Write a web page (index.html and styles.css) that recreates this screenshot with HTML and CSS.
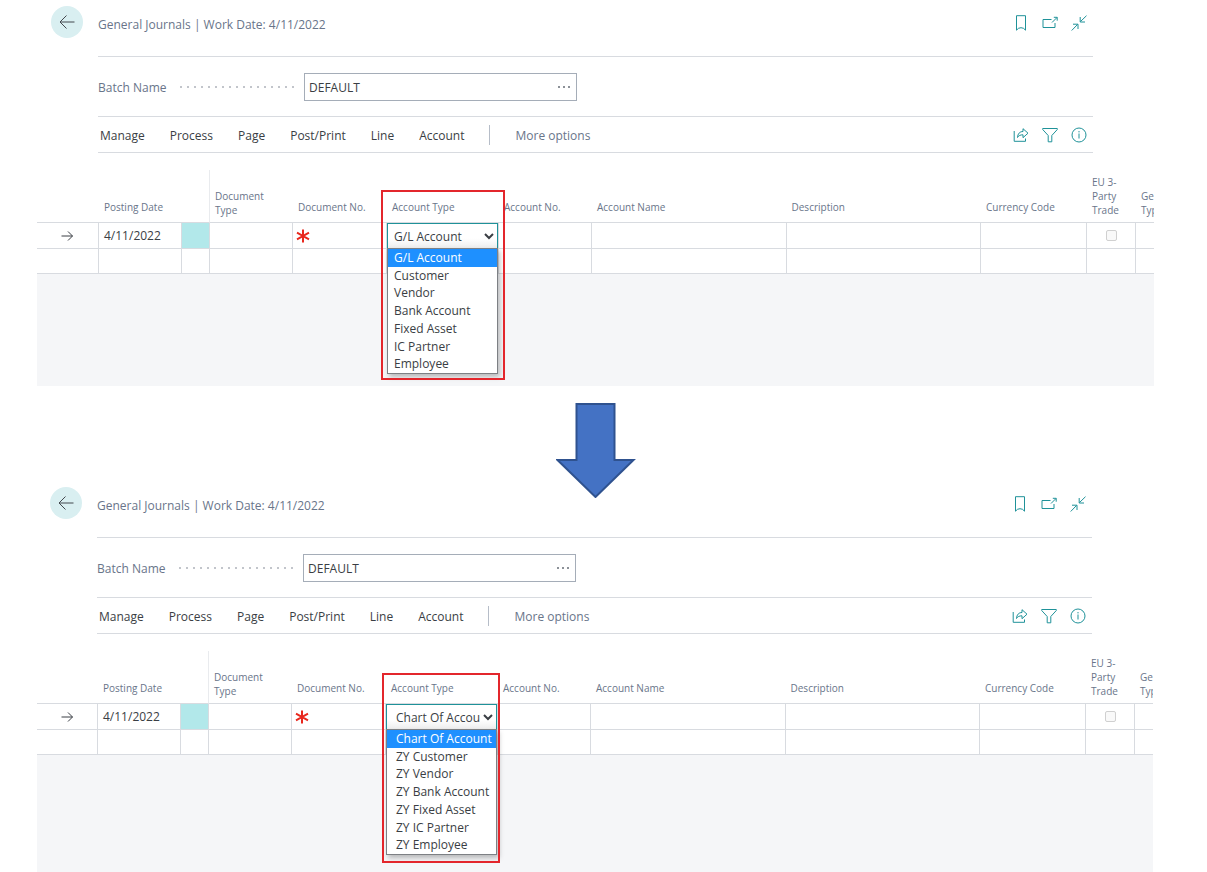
FILE: index.html
```html
<!DOCTYPE html>
<html lang="en">
<head>
<meta charset="utf-8">
<meta name="viewport" content="width=device-width, initial-scale=1">
<title>General Journals</title>
<link rel="stylesheet" href="styles.css">
</head>
<body>
<svg class="sprite" aria-hidden="true">
  <symbol id="i-back" viewBox="0 0 16 16"><path d="M15.5 8H1M7.5 1.5 1 8l6.500 6.500"/></symbol>
  <symbol id="i-row" viewBox="0 0 12 12"><path d="M.5 6h11M7 1.500 11.500 6 7 10.500"/></symbol>
  <symbol id="i-bookmark" viewBox="0 0 16 16"><path d="M3.500.7h9v14.500L10.500 13.300 8 12.700l-2.500.6-2 1.900z"/></symbol>
  <symbol id="i-window" viewBox="0 0 16 16"><path d="M9.500 4.500H1v8h12V8M10 7.500 15 2.500M11.800 2.300H15.200V5.700"/></symbol>
  <symbol id="i-collapse" viewBox="0 0 16 16"><path d="M15.500.7 9.500 6.500M9.200 2v5H14M.7 15.500 6.500 9.500M2 9.200h5V14"/></symbol>
  <symbol id="i-share" viewBox="0 0 16 16"><path d="M1.200 4v10.300h11.300V11.500M4.500 10.500c.3-3.800 2.300-6 5.500-6V1.700l5 4.500-5 4.500V7.800c-2.500 0-4.300.7-5.500 2.700z"/></symbol>
  <symbol id="i-filter" viewBox="0 0 16 16"><path d="M.7 1.500h14.600v1L9.800 8.500v6.300H6.200V8.500L.7 2.500z"/></symbol>
  <symbol id="i-info" viewBox="0 0 16 16"><circle cx="8" cy="8" r="7"/><path d="M8 6.500v5M8 4v1.400"/></symbol>
  <symbol id="i-star" viewBox="0 0 14 14"><path d="M7 .5v13M1 3.700l12 6.600M13 3.700 1 10.300"/></symbol>
</svg>

<main class="page">
  <section class="journal" aria-label="General Journals, standard account types">
    <div class="top">
      <button class="back" type="button" aria-label="Back"><svg><use href="#i-back"/></svg></button>
      <div class="top-main">
        <header class="title-bar">
          <h1 class="title">General Journals | Work Date: 4/11/2022</h1>
          <div class="icons">
            <button type="button" aria-label="Bookmark"><svg><use href="#i-bookmark"/></svg></button>
            <button type="button" aria-label="Open in new window"><svg><use href="#i-window"/></svg></button>
            <button type="button" aria-label="Collapse"><svg><use href="#i-collapse"/></svg></button>
          </div>
        </header>
        <div class="batch">
          <label class="batch-label" for="batch-1">Batch Name</label>
          <span class="leader"></span>
          <div class="lookup">
            <input id="batch-1" type="text" value="DEFAULT">
            <button type="button" aria-label="Look up batch"><i></i><i></i><i></i></button>
          </div>
        </div>
        <nav class="actions">
          <button type="button">Manage</button>
          <button type="button">Process</button>
          <button type="button">Page</button>
          <button type="button">Post/Print</button>
          <button type="button">Line</button>
          <button type="button">Account</button>
          <span class="divider"></span>
          <button class="more" type="button">More options</button>
          <div class="icons">
            <button type="button" aria-label="Share"><svg><use href="#i-share"/></svg></button>
            <button type="button" aria-label="Filter"><svg><use href="#i-filter"/></svg></button>
            <button type="button" aria-label="Details"><svg><use href="#i-info"/></svg></button>
          </div>
        </nav>
      </div>
    </div>
    <table class="lines">
      <colgroup><col class="c-rail"><col class="c-date"><col class="c-menu"><col class="c-doctype"><col class="c-docno"><col class="c-acctype"><col class="c-accno"><col><col><col class="c-currency"><col class="c-eu"><col class="c-gen"></colgroup>
      <thead>
        <tr><th></th><th>Posting Date</th><th class="freeze"></th><th class="wrapped">Document Type</th><th>Document No.</th><th>Account Type</th><th>Account No.</th><th>Account Name</th><th>Description</th><th>Currency Code</th><th class="wrapped">EU 3-Party Trade</th><th class="wrapped cut">Gen. Type</th></tr>
      </thead>
      <tbody>
        <tr>
          <td class="pointer"><svg><use href="#i-row"/></svg></td><td>4/11/2022</td><td class="active"></td><td></td>
          <td class="required"><svg><use href="#i-star"/></svg></td>
          <td class="choice">
            <div class="picker">
              <select aria-label="Account Type"><option>G/L Account</option><option>Customer</option><option>Vendor</option><option>Bank Account</option><option>Fixed Asset</option><option>IC Partner</option><option>Employee</option></select>
              <ul class="menu" role="listbox" aria-label="Account Type">
                <li role="option" aria-selected="true">G/L Account</li><li role="option">Customer</li><li role="option">Vendor</li><li role="option">Bank Account</li><li role="option">Fixed Asset</li><li role="option">IC Partner</li><li role="option">Employee</li>
              </ul>
              <span class="mark"></span>
            </div>
          </td>
          <td></td><td></td><td></td><td></td><td class="check"><input type="checkbox" aria-label="EU 3-Party Trade" disabled></td><td></td>
        </tr>
        <tr><td></td><td></td><td></td><td></td><td></td><td></td><td></td><td></td><td></td><td></td><td></td><td></td></tr>
      </tbody>
    </table>
    <div class="rest"></div>
  </section>

  <svg class="arrow" viewBox="0 0 80 95" aria-hidden="true"><path d="M20.500 1H58.500V57H77.500L39.500 94 1.500 57H20.500z"/></svg>

  <section class="journal custom" aria-label="General Journals, custom account types">
    <div class="top">
      <button class="back" type="button" aria-label="Back"><svg><use href="#i-back"/></svg></button>
      <div class="top-main">
        <header class="title-bar">
          <h2 class="title">General Journals | Work Date: 4/11/2022</h2>
          <div class="icons">
            <button type="button" aria-label="Bookmark"><svg><use href="#i-bookmark"/></svg></button>
            <button type="button" aria-label="Open in new window"><svg><use href="#i-window"/></svg></button>
            <button type="button" aria-label="Collapse"><svg><use href="#i-collapse"/></svg></button>
          </div>
        </header>
        <div class="batch">
          <label class="batch-label" for="batch-2">Batch Name</label>
          <span class="leader"></span>
          <div class="lookup">
            <input id="batch-2" type="text" value="DEFAULT">
            <button type="button" aria-label="Look up batch"><i></i><i></i><i></i></button>
          </div>
        </div>
        <nav class="actions">
          <button type="button">Manage</button>
          <button type="button">Process</button>
          <button type="button">Page</button>
          <button type="button">Post/Print</button>
          <button type="button">Line</button>
          <button type="button">Account</button>
          <span class="divider"></span>
          <button class="more" type="button">More options</button>
          <div class="icons">
            <button type="button" aria-label="Share"><svg><use href="#i-share"/></svg></button>
            <button type="button" aria-label="Filter"><svg><use href="#i-filter"/></svg></button>
            <button type="button" aria-label="Details"><svg><use href="#i-info"/></svg></button>
          </div>
        </nav>
      </div>
    </div>
    <table class="lines">
      <colgroup><col class="c-rail"><col class="c-date"><col class="c-menu"><col class="c-doctype"><col class="c-docno"><col class="c-acctype"><col class="c-accno"><col><col><col class="c-currency"><col class="c-eu"><col class="c-gen"></colgroup>
      <thead>
        <tr><th></th><th>Posting Date</th><th class="freeze"></th><th class="wrapped">Document Type</th><th>Document No.</th><th>Account Type</th><th>Account No.</th><th>Account Name</th><th>Description</th><th>Currency Code</th><th class="wrapped">EU 3-Party Trade</th><th class="wrapped cut">Gen. Type</th></tr>
      </thead>
      <tbody>
        <tr>
          <td class="pointer"><svg><use href="#i-row"/></svg></td><td>4/11/2022</td><td class="active"></td><td></td>
          <td class="required"><svg><use href="#i-star"/></svg></td>
          <td class="choice">
            <div class="picker">
              <select aria-label="Account Type"><option>Chart Of Account</option><option>ZY Customer</option><option>ZY Vendor</option><option>ZY Bank Account</option><option>ZY Fixed Asset</option><option>ZY IC Partner</option><option>ZY Employee</option></select>
              <ul class="menu" role="listbox" aria-label="Account Type">
                <li role="option" aria-selected="true">Chart Of Account</li><li role="option">ZY Customer</li><li role="option">ZY Vendor</li><li role="option">ZY Bank Account</li><li role="option">ZY Fixed Asset</li><li role="option">ZY IC Partner</li><li role="option">ZY Employee</li>
              </ul>
              <span class="mark"></span>
            </div>
          </td>
          <td></td><td></td><td></td><td></td><td class="check"><input type="checkbox" aria-label="EU 3-Party Trade" disabled></td><td></td>
        </tr>
        <tr><td></td><td></td><td></td><td></td><td></td><td></td><td></td><td></td><td></td><td></td><td></td><td></td></tr>
      </tbody>
    </table>
    <div class="rest"></div>
  </section>
</main>
</body>
</html>
```

FILE: styles.css
```css
:root {
  --rail: 61px;
  --grid-rail: 62px;
  --line: #d8dbe0;
  --muted: #69758a;
  --ink: #3a3e44;
  --teal: #1f9299;
}

* { box-sizing: border-box; }

body {
  margin: 0;
  background: #fff;
  color: var(--ink);
  font: 12px/18px "Open Sans", "Noto Sans", sans-serif;
}

button, input, select { font: inherit; color: inherit; }
button { padding: 0; border: 0; background: none; cursor: pointer; }
svg { display: block; fill: none; stroke: currentColor; }
.sprite { position: absolute; width: 0; height: 0; }

.page {
  display: flex;
  flex-direction: column;
  min-height: 100vh;
  padding: 0 53px 0 37px;
}

.journal { display: flex; flex-direction: column; }
.journal.custom { --rail: 60px; --grid-rail: 61px; flex: 1; margin-right: 1px; }

/* Header, batch field and action bar */
.top {
  display: grid;
  grid-template-columns: var(--rail) 1fr;
  padding-right: 61px;
}
.back {
  display: grid;
  place-items: center;
  justify-self: end;
  width: 32px;
  height: 32px;
  margin: 6px 15px 0 0;
  border-radius: 50%;
  background: #d9eff1;
}
.back svg { width: 16px; height: 16px; stroke: #43484e; }

.title-bar {
  display: flex;
  justify-content: space-between;
  height: 57px;
  padding: 15px 6px 0 0;
  border-bottom: 1px solid var(--line);
}
.title { margin: 0; font-size: 12px; line-height: 20px; font-weight: 400; color: var(--muted); }
.icons { display: flex; gap: 13px; height: 16px; color: var(--teal); }
.icons svg { width: 16px; height: 16px; }

.batch {
  display: flex;
  align-items: center;
  height: 60px;
  border-bottom: 1px solid var(--line);
}
.batch-label { width: 82px; padding-top: 2px; color: var(--muted); }
.leader {
  width: 114px;
  height: 2px;
  background: radial-gradient(circle at 1px 1px, #c2c5cb 1px, transparent 1px) 0 0 / 7px 2px;
}
.lookup {
  display: flex;
  width: 273px;
  height: 28px;
  margin-left: 10px;
  border: 1px solid #a5adb8;
}
.lookup input {
  flex: 1;
  min-width: 0;
  padding: 2px 4px 0;
  border: 0;
  outline: 0;
  background: none;
}
.lookup button { display: flex; align-items: center; gap: 3px; padding: 0 6px; }
.lookup i { width: 2px; height: 2px; border-radius: 50%; background: #666c76; }

.actions {
  display: flex;
  align-items: center;
  gap: 25px;
  height: 36px;
  padding: 0 6px 0 2px;
  border-bottom: 1px solid var(--line);
}
.actions > button { padding-top: 2px; }
.actions .more { color: var(--muted); }
.actions .icons { margin-left: auto; }
.divider { width: 1px; height: 20px; background: #b6bdc8; }

/* Journal lines */
.lines {
  width: 100%;
  margin-top: 17px;
  table-layout: fixed;
  border-collapse: separate;
  border-spacing: 0;
}
.c-rail { width: var(--grid-rail); }
.c-date { width: 83px; }
.c-menu { width: 28px; }
.c-doctype { width: 83px; }
.c-docno { width: 94px; }
.c-acctype { width: 112px; }
.c-accno { width: 93px; }
.c-currency { width: 106px; }
.c-eu { width: 49px; }
.c-gen { width: 18px; }

.lines th {
  height: 53px;
  padding: 0 0 8px 5px;
  border-bottom: 1px solid var(--line);
  vertical-align: bottom;
  text-align: left;
  font-size: 10px;
  line-height: 14px;
  font-weight: 400;
  color: var(--muted);
}
.lines .wrapped { padding-right: 10px; padding-bottom: 5px; }
.lines .cut { padding-right: 0; overflow: hidden; }
.lines .freeze { border-right: 1px solid #e9ebee; }
.lines td {
  height: 26px;
  padding: 0 0 0 5px;
  border-right: 1px solid var(--line);
  border-bottom: 1px solid var(--line);
}
.lines td:last-child { border-right: 0; }
.lines tr:last-child td { height: 25px; }
.lines .active { background: #b2e8ea; }
.lines .pointer { padding-left: 24px; }
.pointer svg { width: 12px; height: 12px; }
.lines .required { padding-left: 3px; }
.required svg { width: 14px; height: 14px; stroke: #e8281e; stroke-width: 2; }
.lines .choice { padding: 0; vertical-align: top; }
.lines .check { padding: 0; text-align: center; }
.check input {
  display: block;
  appearance: none;
  width: 11px;
  height: 11px;
  margin: 0 auto;
  border: 1px solid #d0d0d0;
  border-radius: 2px;
  background: #f9f9f9;
}

.picker { position: relative; height: 25px; }
.picker select {
  display: block;
  width: 111px;
  height: 26px;
  padding: 0 0 0 2px;
  border: 1px solid var(--teal);
  border-radius: 0;
  outline: 0;
  background: linear-gradient(#fff 60%, #eee);
}
.menu {
  position: absolute;
  z-index: 1;
  top: 25px;
  left: 0;
  display: grid;
  grid-auto-rows: 1fr;
  width: 111px;
  height: 126px;
  margin: 0;
  padding: 0;
  border: 1px solid #7d8084;
  background: #fff;
  box-shadow: 2px 3px 5px rgba(0, 0, 0, .25);
  line-height: 17px;
  list-style: none;
}
.menu li { padding-left: 6px; white-space: nowrap; }
.menu [aria-selected="true"] { background: #1e90ff; color: #fff; }
.mark {
  position: absolute;
  z-index: 2;
  top: -33px;
  left: -6px;
  width: 124px;
  height: 190px;
  border: 2px solid #e3262c;
  pointer-events: none;
}
.custom .picker select { padding-left: 5px; }
.custom .menu li { padding-left: 9px; }
.custom .mark { top: -31px; left: -4px; width: 118px; }

.rest { flex: 1; min-height: 112px; background: #f5f6f8; }

.arrow {
  align-self: center;
  width: 80px;
  height: 95px;
  margin: 17px 0 -17px;
  fill: #4472c4;
  stroke: #2f528f;
  stroke-width: 2;
}
```
